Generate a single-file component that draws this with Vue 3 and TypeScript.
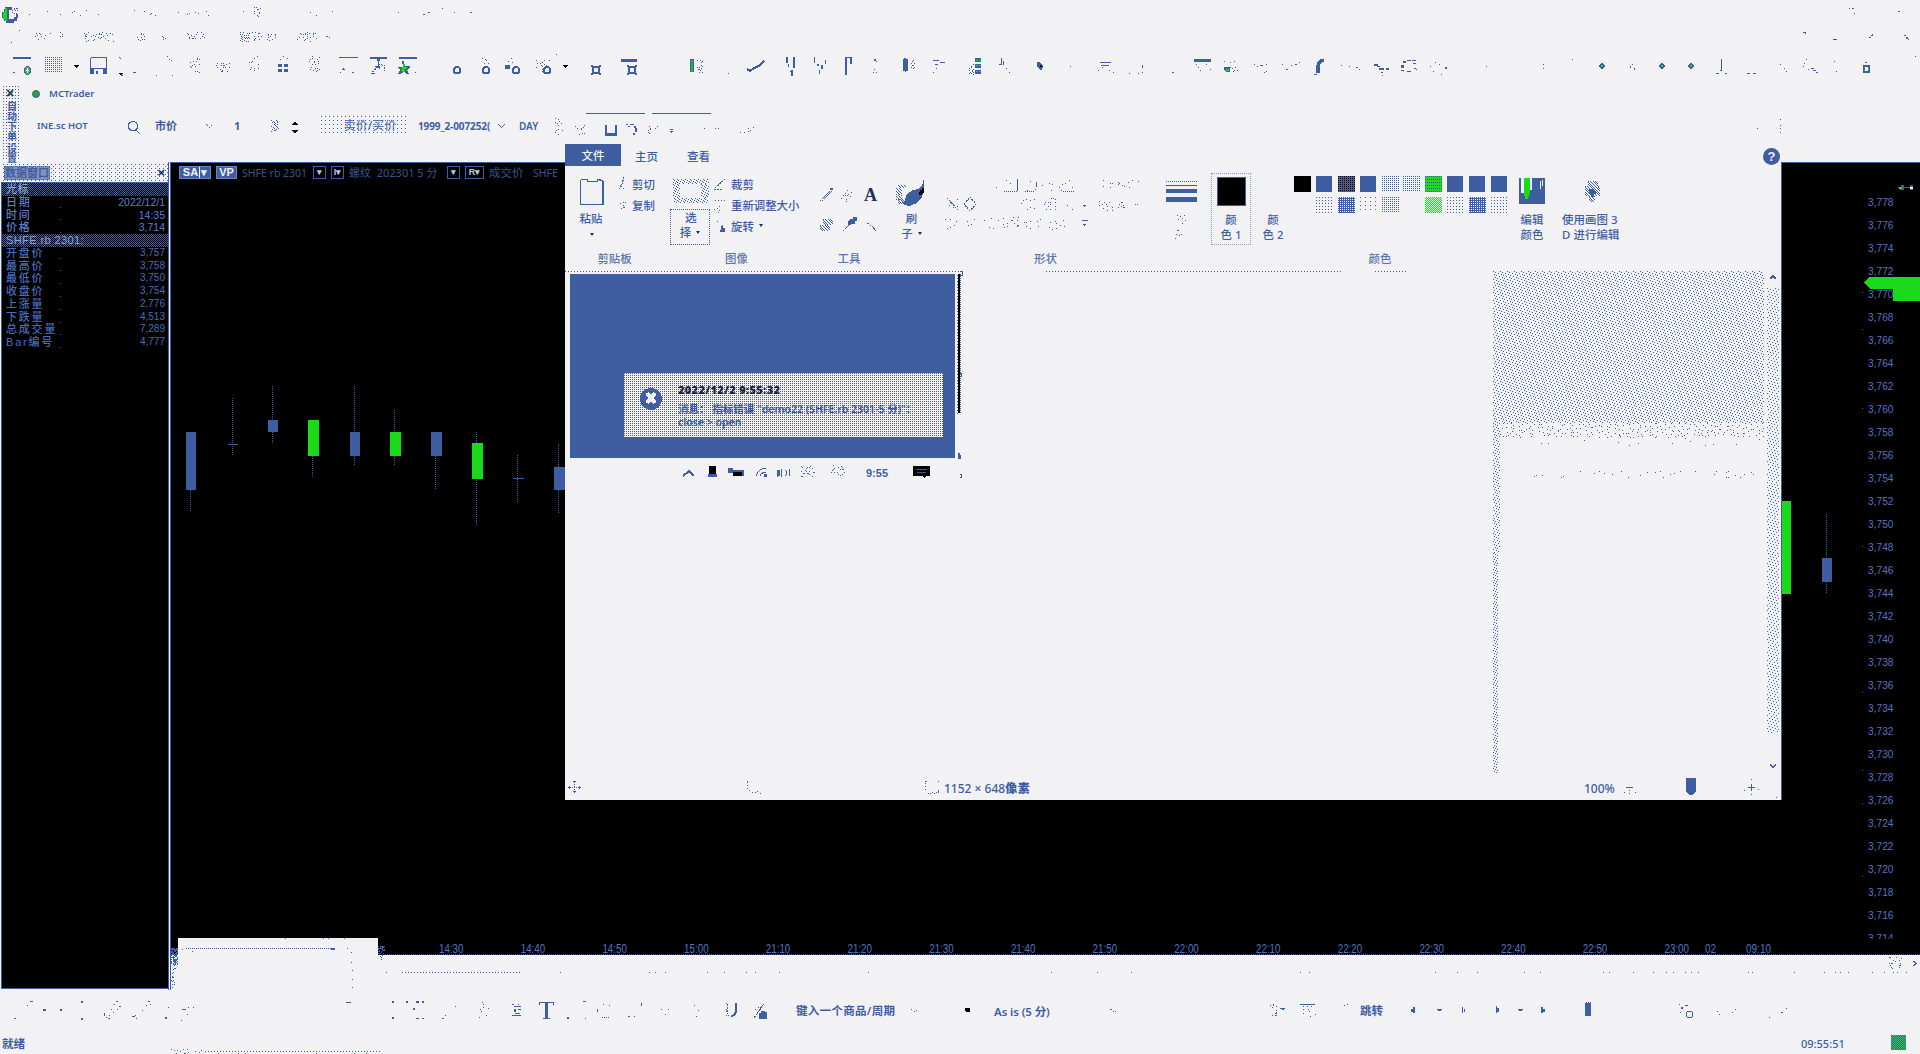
<script setup lang="ts">
/** Builds a path of small rectangles from "x,y[,w[,h]]" entries. */
function dots(list: string): string {
  return list
    .trim()
    .split(/\s+/)
    .map((item) => {
      const [x, y, w = 1, h = 1] = item.split(',').map(Number)
      return `M${x} ${y}h${w}v${h}h${-w}z`
    })
    .join('')
}

/** Scatters single pixels over a box, one for each step x step cell. */
function grain(x: number, y: number, w: number, h: number, step: number, fill = 1): string {
  let seed = Math.round(x * 31 + y * 17 + w * 7 + h) + 11
  const next = () => {
    seed = (seed * 1103515245 + 12345) % 2147483648
    return seed / 2147483648
  }
  let path = ''
  for (let cy = 0; cy < h; cy += step) {
    for (let cx = 0; cx < w; cx += step) {
      const dx = Math.floor(next() * step)
      const dy = Math.floor(next() * step)
      if (next() <= fill && cx + dx < w && cy + dy < h) path += `M${x + cx + dx} ${y + cy + dy}h1v1h-1z`
    }
  }
  return path
}

/** Evenly spread pixels: one every `period` px per row, each row shifted by the golden ratio. */
function weave(x: number, y: number, w: number, h: number, period: number): string {
  let path = ''
  for (let r = 0; r < h; r++) {
    for (let c = (r * 0.382 * period) % period; c < w; c += period) path += `M${x + Math.floor(c)} ${y + r}h1v1h-1z`
  }
  return path
}

const titleMarks = dots(
  '29,14 47,11 60,14 72,12 74,11 80,15 86,10 98,14 134,10 144,11 150,14 151,13 155,15 178,12 187,14 189,13 195,12 198,13 206,11 208,15 243,11 310,12 316,15 332,11 398,12 423,14,2 428,12,2 442,8 454,12 470,12,2 1849,8 1852,8,2 1854,13 1898,11,2',
) + grain(254, 7, 7, 10, 2, 0.5)

const menuMarks =
  dots('19,30 11,42 1803,32,3 1805,33 1833,39,4 1869,37,2 1871,35,2 1872,34 1904,35,2 1906,37,2,2 1908,39') +
  grain(34, 33, 18, 7, 2, 0.35) + grain(60, 32, 3, 7, 2, 0.5) + grain(84, 32, 30, 10, 2, 0.42) +
  grain(137, 32, 9, 9, 2, 0.5) + grain(162, 33, 4, 7, 2, 0.4) + grain(185, 32, 20, 9, 2, 0.4) +
  grain(240, 32, 10, 10, 2, 0.9) + grain(251, 32, 11, 9, 2, 0.4) + grain(267, 33, 11, 8, 2, 0.5) +
  grain(297, 32, 20, 10, 2, 0.4) + grain(325, 36, 7, 2, 2, 0.8)

const toolbarMarks = dots(
  `13,57,18,2 13,72,2 119,57 120,58 121,75,2 133,72,3 156,75 172,75 167,56 169,59 171,60
   278,64,4,3 284,64,4,3 278,69,4,3 284,69,4,3 280,59 283,56 287,58
   339,57,19,1 343,68,1 342,69,3,1 340,72 352,72,2 370,57,17,2 377,59,3,2 378,61,1,6 376,66,4,2 374,69,2 372,71,2 371,73,4 382,65 384,67
   399,57,18,2 415,72
   621,59,16,3 556,54 486,60 484,63 488,63 505,65,5,4 508,61 512,62 511,58
   728,73 786,57,2,6 793,57,2,11 788,64,1,3 791,70,2,6 790,71
   814,57,1,6 817,64,2,2 821,65,2,4 825,60,1,4 819,70,1,4
   845,57,7,1 845,58,2,17 850,58,2,6 874,59,2,2 876,61 874,69 876,72 873,72
   933,60,6 935,64,3 940,62,5 936,68 933,72 1001,58,1,7 999,64,2 1003,61,1,4 1006,68 1009,72
   1070,66 1100,62,11,1 1101,65,8,1 1102,67 1098,70 1109,70 1113,72 1129,73 1138,73 1142,65,1,3 1142,72 1172,72,2
   1194,59,17,3 1196,64 1198,67 1200,70 1206,64 1210,69 1224,61 1230,62 1234,61 1254,64 1257,66 1260,65,3 1266,64 1266,71 1264,72
   1282,64 1286,69,2 1291,65 1295,64,2 1299,62 1314,74,3 1341,65 1349,66 1356,67,2 1359,69
   1374,64,4,2 1379,68,5,2 1386,68,3,2 1381,72,2 1382,75 1377,66,3,1
   1401,65,3,3 1403,61,3,2 1407,60,4 1412,60,4 1413,63,3 1401,70,3 1407,71,4 1414,68,2 1416,69
   1430,66 1435,62 1439,64 1445,67,2,2 1433,71 1441,74 1486,66 1543,64 1543,68 1572,59
   1721,59,1,12 1716,73,3,1 1725,73,2,1 1720,70 1747,73,3 1753,73,3 1780,64 1784,68 1786,71 1804,63 1806,59 1803,66 1808,69 1811,68,3,1 1813,70,3,1 1816,72,2 1834,61 1836,71 1863,65,7,8 1865,62,2 1915,56`,
)
const toolbarGrain =
  grain(190, 57, 10, 16, 2, 0.35) + grain(216, 63, 14, 9, 2, 0.55) + grain(249, 56, 10, 16, 2, 0.35) +
  grain(309, 56, 11, 17, 2, 0.4) + grain(697, 60, 6, 13, 2, 0.55) + grain(911, 60, 4, 9, 2, 0.8) +
  grain(969, 63, 5, 12, 2, 0.7) + grain(1222, 67, 18, 5, 2, 0.4) + grain(1629, 63, 6, 7, 2, 0.55) +
  grain(536, 60, 14, 13, 2, 0.35) + grain(375, 63, 10, 9, 2, 0.4) + grain(482, 58, 6, 6, 3, 0.5)
const rings = [457, 486, 516, 547]
const gears = [596, 632]
const greenStops = [1602, 1662, 1691]

const cursorRows = [['日期', '2022/12/1'], ['时间', '14:35'], ['价格', '3,714']]
const barRows = [
  ['开盘价', '3,757'], ['最高价', '3,758'], ['最低价', '3,750'], ['收盘价', '3,754'],
  ['上涨量', '2,776'], ['下跌量', '4,513'], ['总成交量', '7,289'], ['Bar编号', '4,777'],
]

interface Candle { x: number; w: number; top: number; bottom: number; high: number; low: number; up?: boolean }
const candles: Candle[] = [
  { x: 186, w: 10, top: 432, bottom: 490, high: 432, low: 512 },
  { x: 228, w: 10, top: 444, bottom: 445, high: 398, low: 455 },
  { x: 268, w: 10, top: 420, bottom: 432, high: 386, low: 444 },
  { x: 308, w: 11, top: 420, bottom: 456, high: 420, low: 477, up: true },
  { x: 350, w: 10, top: 432, bottom: 456, high: 386, low: 466 },
  { x: 390, w: 11, top: 432, bottom: 456, high: 410, low: 466, up: true },
  { x: 431, w: 11, top: 432, bottom: 456, high: 432, low: 490 },
  { x: 472, w: 11, top: 443, bottom: 479, high: 432, low: 525, up: true },
  { x: 513, w: 11, top: 478, bottom: 479, high: 455, low: 502 },
  { x: 554, w: 11, top: 467, bottom: 490, high: 444, low: 513 },
  { x: 1781, w: 10, top: 501, bottom: 594, high: 501, low: 594, up: true },
  { x: 1822, w: 10, top: 558, bottom: 582, high: 514, low: 593 },
]
const prices = Array.from({ length: 33 }, (_, i) => ({ label: `3,${778 - i * 2}`, y: 206.3 + i * 22.99 }))
const times = ['14:30', '14:40', '14:50', '15:00', '21:10', '21:20', '21:30', '21:40', '21:50', '22:00', '22:10', '22:20', '22:30', '22:40', '22:50', '23:00']
  .map((label, i) => ({ label, x: 439 + i * 81.7, w: 24.5 }))
  .concat([{ label: '02', x: 1705, w: 11 }, { label: '09:10', x: 1746, w: 25 }])

const chartGrain = grain(171, 948, 7, 7, 1, 0.75) + grain(378, 946, 7, 9, 1, 0.6)
const underGrain =
  grain(171, 955, 7, 10, 1, 0.5) + grain(171, 957, 5, 32, 2, 0.6) + grain(378, 955, 7, 7, 2, 0.5) +
  grain(1888, 957, 14, 14, 2, 0.4) + grain(530, 972, 1050, 1, 8, 1) + grain(1597, 972, 320, 1, 4, 1) +
  dots('351,962 352,970 352,979 352,987 386,972 1913,961,2 1914,962,2 1915,963,2 1914,964,2 1913,965,2')

const drawMarks = dots(
  `30,1001,3 27,1005 14,1018,2 43,1009,3,2 60,1009,2,2 81,1001,2,2 81,1018,2,2 165,1017,2,2 168,1007 182,1009,4 188,1007 193,1007 187,1014 181,1020
   116,1001,2 114,1004 119,1006,2 117,1009 113,1012 109,1015 104,1013,1,3 106,1017 108,1018,2 111,1009 148,1001,2 146,1005 150,1004 142,1010 135,1015 132,1016,3 136,1018
   346,1002,5 392,1001,2,2 406,1001,2,2 416,1001,3,2 422,1001,2,2 413,1008,2,2 392,1017,2,2 416,1018,3 422,1018,2 442,1018,2 445,1015 455,1006
   512,1004,2 518,1004 514,1006,7 514,1009,2,3 518,1009,3 515,1013,5 512,1015,9
   539,1002,15,1 539,1003,1,2 553,1003,1,2 545,1003,3,15 543,1018,7
   567,1017,2,2 583,1001,3 585,1018 597,1009,1,3 603,1004 609,1005 602,1017 604,1017 606,1017 608,1017 628,1016,2 634,1016
   641,1003,1,3 661,1009 668,1009 665,1014 694,1005 698,1010 696,1016`,
)
const drawGrain = grain(478, 1001, 12, 18, 5, 1) + grain(725, 1003, 2, 13, 2, 0.7) + grain(754, 1007, 8, 10, 2, 0.5)
const rightMarks = dots(
  `1280,1008,5 1282,1009,2 1300,1004,15,1 1303,1006 1307,1006 1311,1006 1303,1009 1308,1009 1303,1013 1309,1011 1315,1014 1310,1016 1344,1005 1347,1004
   1411,1009,4,3 1413,1007,2,6 1437,1009,5,1 1438,1010,3 1462,1007,1,6 1464,1009,1,3 1496,1006,1,7 1497,1008,2,4 1518,1009,5,1 1519,1010,3 1541,1007,2,6 1543,1009,2,3
   1585,1003,6,13 1586,1002 1588,1002 1590,1002 1679,1004 1681,1007,2,2 1685,1005,3 1680,1012 1717,1011 1719,1014 1732,1012 1735,1009 1769,1017 1781,1012,2 1786,1008`,
)

const qatMarks = dots(
  `605,125,2,11 615,125,2,11 607,133,8,3 670,129,3,1 670,131,3,1 671,132,1,1
   626,124,2 628,126,2 630,124,4,1 634,126,2,2 635,128,2,4 633,133,2,2 704,128`,
) + grain(575, 125, 10, 10, 2, 0.45) + grain(648, 125, 3, 9, 2, 0.7) + grain(652, 126, 6, 3, 2, 0.4) +
  grain(715, 126, 9, 7, 3, 0.7) + grain(740, 126, 17, 7, 3, 0.6)

const shapeGrain = grain(946, 198, 12, 13, 4, 0.7) + grain(990, 180, 30, 12, 5, 0.4) + grain(1025, 180, 48, 12, 4, 0.4) +
  grain(1020, 198, 15, 12, 4, 0.7) + grain(1043, 198, 14, 12, 3, 0.5) + grain(1065, 198, 8, 12, 4, 0.6) +
  grain(945, 218, 12, 12, 4, 0.6) + grain(965, 218, 12, 10, 4, 0.7) + grain(984, 218, 15, 12, 4, 0.6) +
  grain(1003, 217, 16, 13, 3, 0.6) + grain(1022, 218, 20, 11, 4, 0.6) + grain(1048, 218, 25, 12, 5, 0.5) +
  grain(1103, 180, 36, 8, 4, 0.6) + grain(1099, 200, 14, 12, 3, 0.5) + grain(1118, 202, 7, 6, 2, 0.6) + grain(1130, 204, 8, 2, 3, 0.6)
const shapeMarks = dots('1017,179,1,12 1036,182,1,5 1083,205,3,1 1084,206 1082,220,6,1 1083,224,3,1 1084,225')

const palette = [
  'ink', 'blue', 'deep', 'blue', 'mist', 'mist', 'green', 'blue', 'blue', 'blue',
  'none', 'sparse', 'mid', 'faint', 'mist', 'none', 'lime', 'sparse', 'mid', 'sparse',
]

const sheetGrain = weave(1493, 271, 271, 152, 7) + grain(1500, 423, 264, 15, 4, 0.95) + grain(1530, 438, 232, 8, 8, 0.5) +
  weave(1493, 423, 7, 130, 6.4) + weave(1493, 553, 5, 220, 5.3) + grain(1530, 471, 230, 7, 6, 0.6) + weave(1767, 288, 12, 445, 8.2)
const trayGrain = grain(800, 466, 15, 11, 2, 0.5) + grain(829, 465, 16, 11, 2, 0.45) + grain(950, 467, 5, 9, 4, 0.7)
</script>

<template>
  <div class="desk">
    <svg class="strip" width="1920" height="28" viewBox="0 0 1920 28">
      <path class="f-blue" d="M5 7h7v3h-3v9h4v4H6v-2H4v-3H2v-6h2v-3h1zM12 19h2v-2h2v-3h2v4h-1v3h-3v2h-2z" />
      <path class="f-green" d="M5 8h2v13H5v-2H3v-7h2z" />
      <path class="f-blue" :d="grain(11, 7, 7, 8, 2, 0.7)" />
      <path class="f-blue" :d="titleMarks" />
    </svg>
    <svg class="strip" width="1920" height="20" viewBox="0 28 1920 20"><path class="f-blue" :d="menuMarks" /></svg>
    <svg class="strip" width="1920" height="36" viewBox="0 48 1920 36">
      <path class="f-blue" :d="toolbarMarks" />
      <path class="f-blue" :d="toolbarGrain" />
      <path class="f-blue" d="M24 69l2-3h3l2 3v3l-2 3h-3l-2-3z" />
      <path class="f-green" d="M25 69h1v-2h3v2h1v3h-1v2h-3v-2h-1z" /><path class="f-page" d="M27 68h1v2h1v1h-1v2h-1v-2h-1v-1h1z" />
      <g class="grid-icon"><path v-for="n in 8" :key="n" :d="`M45 ${55.5 + n * 2}h18`" /></g>
      <path d="M73 65h6l-3 3zM118 73h5l-2 2zM562 65h6l-3 3z" />
      <path class="s-blue" d="M90.500 57.500h16v16M90.500 57.500v16M92 68.500h13" /><path class="f-blue" d="M90 68h4v6h-4zM103 68h4v6h-4zM96 71h2v3h-2z" />
      <path class="f-blue" d="M402 61h2v5h6v2l-3 2 2 4h-3l-2-2-4 2h-2l2-4-2-2v-1h5z" /><path class="f-green" d="M403 64h2v3h2v2h-2v3h-2l-2-1 1-2-2-1 3-1z" />
      <rect v-for="x in rings" :key="x" class="s-blue thick" :x="x - 3" y="67" width="6" height="6.500" rx="3" />
      <g v-for="x in gears" :key="x">
        <rect class="s-blue thick" :x="x - 3" y="67" width="6" height="6" rx="2" /><path class="f-blue" :d="`M${x - 5} 65h2v2h-2zM${x + 3} 65h2v2h-2zM${x - 5} 73h2v2h-2zM${x + 3} 73h2v2h-2z`" />
      </g>
      <path class="f-blue" d="M690 59h4v13h-4z" /><path class="s-green dash" d="M691.500 60v12M692.500 61v11" />
      <path class="s-blue thick" d="M747 69l3 2 4-3 3-1 3-2 4-4" />
      <path class="f-blue" d="M903 59h1v-1h2v1h2v12h-2v1h-1v-1h-2z" />
      <path class="f-blue" d="M975 58h6v4h-6zM975 64h6v4h-6zM975 70h6v4h-6z" /><path class="s-green dash" d="M976 60.500h5M976 65.500h5M976 71.500h5" />
      <path class="f-blue" d="M1037 62h2l4 4-1 4h-2l-3-4z" /><path d="M1040 65h1v1h1v1h-2z" />
      <path class="f-blue" d="M1223 69l3-2h4v5h-4z" /><path class="f-green" d="M1226 69h3v2h-3z" />
      <path class="f-blue" d="M1316 73v-7l2-5 2-2h4v3h-2l-2 3v8z" />
      <g v-for="x in greenStops" :key="x"><path class="f-blue" :d="`M${x - 3} 66l3-4 3 4-3 4z`" /><path class="f-green" :d="`M${x - 1} 65h2v2h-2z`" /></g>
      <path class="f-page" d="M1865 67h3v4h-3z" /><path class="f-green" d="M1864 67h1v1h-1zM1864 70h1v1h-1zM1868 68h1v2h-1z" />
    </svg>

    <section class="trader">
      <aside class="side-tab"><span class="side-x">×</span><span class="side-name">自动下单 设置</span></aside>
      <div class="trader-main">
        <div class="trader-head"><i class="lamp" />MCTrader</div>
        <div class="order-row">
          <span class="symbol">INE.sc HOT</span>
          <svg class="lens" width="13" height="14" viewBox="0 0 13 14"><path class="s-blue" d="M8 9l4 4M5 .5c6 0 6 9 0 9s-6-9 0-9z" /></svg>
          <b class="kind">市价</b>
          <svg class="chev c1" width="7" height="5" viewBox="0 0 7 5"><path class="s-blue dash" d="M.5.500l3 3 3-3" /></svg>
          <b class="lots">1</b>
          <svg class="lot-grid" width="9" height="12" viewBox="0 0 9 12"><path class="f-blue" :d="grain(0, 0, 9, 12, 2, 0.7)" /></svg>
          <svg class="spin" width="6" height="11" viewBox="0 0 6 11"><path d="M0 3h6L4 0H2zM0 8h6l-2 3H2z" /></svg>
          <span class="quote">卖价/买价</span>
          <b class="account">1999_2-007252(</b>
          <svg class="chev" width="7" height="5" viewBox="0 0 7 5"><path class="s-blue" d="M.5.500l3 3 3-3" /></svg>
          <b class="day">DAY</b>
          <svg class="lot-grid q2" width="8" height="19" viewBox="0 0 8 19"><path class="f-blue" :d="grain(0, 0, 8, 19, 3, 0.8)" /></svg>
        </div>
      </div>
    </section>

    <div class="work">
      <aside class="data">
        <header class="data-title"><b>数据窗口</b><span>×</span></header>
        <div class="data-body">
          <div class="data-group">光标</div>
          <div v-for="row in cursorRows" :key="row[0]" class="data-row bright"><span>{{ row[0] }}</span><i /><em>{{ row[1] }}</em></div>
          <div class="data-group">SHFE.rb 2301:</div>
          <div v-for="row in barRows" :key="row[0]" class="data-row"><span>{{ row[0] }}</span><i /><em>{{ row[1] }}</em></div>
        </div>
      </aside>

      <main class="chart">
        <header class="legend">
          <b class="chip">SA<i class="cut" />▾</b><b class="chip vp">VP</b>
          <span class="leg-a">SHFE rb 2301</span><b class="box">▾</b><b class="box">I▾</b>
          <span class="leg-b">螺纹&nbsp; 202301 5 分</span><b class="box">▾</b><b class="box r">R▾</b>
          <span class="leg-c">成交价</span><span>SHFE</span>
        </header>
        <svg class="plot" width="1749" height="772" viewBox="171 183 1749 772">
          <g v-for="c in candles" :key="c.x">
            <path class="wick" :d="`M${c.x + Math.floor(c.w / 2) - 0.5} ${c.high}V${c.low}`" />
            <rect :class="c.up ? 'f-green' : 'f-blue'" :x="c.x" :y="c.top" :width="c.w" :height="c.bottom - c.top" />
          </g>
          <g class="price">
            <text v-for="p in prices" :key="p.label" x="1868" :y="p.y" textLength="25.500" lengthAdjust="spacingAndGlyphs">{{ p.label }}</text>
          </g>
          <rect x="1860" y="939" width="60" height="6" />
          <path class="f-blue" :d="grain(1862, 200, 1, 738, 9)" />
          <path class="f-green" d="M1864 282.500l6-6h50v24h-27v-12h-23z" />
          <path class="f-blue" d="M1897 187h4v-2h3v2h6v-2h3v5h-3v-2h-6v2h-4z" /><path class="f-green" d="M1899 187h3v2h-3z" /><path class="f-page" d="M1910 187h3v2h-3z" />
          <g class="time">
            <text v-for="t in times" :key="t.label" :x="t.x" y="953" :textLength="t.w" lengthAdjust="spacingAndGlyphs">{{ t.label }}</text>
          </g>
          <path class="f-blue" :d="chartGrain" />
          <path class="rule" d="M385 954.500h1535" />
          <rect class="f-page" x="178" y="938" width="200" height="17" />
          <path class="rule" d="M186 948.500h148" /><path class="f-blue" d="M331 948h4v2h-4z" />
          <path class="f-blue" :d="grain(178, 938, 170, 1, 5, 0.6) + dots('182,949 192,951 347,948 351,952')" />
        </svg>
        <svg class="strip under" width="1749" height="35" viewBox="171 955 1749 35">
          <path class="f-blue" :d="underGrain" /><path class="rule wide" d="M402 972.500h118" />
        </svg>
      </main>
    </div>

    <footer class="bottom-bar">
      <svg width="790" height="44" viewBox="0 990 790 44">
        <path class="f-blue" :d="drawMarks" /><path class="f-blue" :d="drawGrain" />
        <path class="s-blue dash" d="M727 1003.500v10l2 2.500" /><path class="s-blue thick" d="M736 1003v9l-2 3-3 1.500" />
        <path class="f-blue" d="M759 1013h2v-2h4v1h2v7h-8z" />
        <path class="s-blue dash" d="M754 1018l8-12 3-3" />
      </svg>
      <b class="jump-in">键入一个商品/周期</b>
      <svg class="mini" width="80" height="20" viewBox="900 1000 80 20"><path class="f-blue" :d="dots('911,1009 914,1011 916,1010')" /><path d="M965 1008h5v3l-1 1h-2l-2-1z" /></svg>
      <b class="as-is">As is (5 分)</b>
      <svg class="gap" width="306" height="44" viewBox="1054 990 306 44"><path class="s-blue dash" d="M1110 1009l3 2h3" /><path class="f-blue" :d="grain(1270, 1003, 7, 13, 2, 0.5)" /><path class="f-blue" :d="rightMarks" /></svg>
      <b class="jump">跳转</b>
      <svg class="gap" width="430" height="44" viewBox="1383 990 430 44"><path class="f-blue" :d="rightMarks" /><rect class="s-blue" x="1686.500" y="1011.500" width="6" height="6" rx="2" /></svg>
    </footer>
    <footer class="status">
      <b>就绪</b>
      <svg class="status-mid" width="220" height="20" viewBox="168 1034 220 20"><path class="rule wide" d="M205 1051.500h175" /><path class="f-blue" :d="grain(170, 1049, 36, 5, 3, 0.7) + grain(205, 1053, 178, 1, 5)" /></svg>
      <time>09:55:51</time><i class="live" />
    </footer>

    <section class="paint">
      <svg class="strip" width="1216" height="32" viewBox="565 112 1216 32">
        <path class="f-blue" d="M586 113h59v1h-59zM652 113h59v1h-59z" /><path class="f-blue" :d="qatMarks" />
        <path class="f-blue" :d="dots('1757,128 1780,119 1780,125 1780,128 1780,132')" />
      </svg>
      <nav class="tabs">
        <b class="tab file">文件</b><b class="tab home">主页</b><b class="tab view">查看</b><b class="help">?</b>
      </nav>

      <div class="ribbon">
        <div class="group clip">
          <div class="group-body">
            <div class="big paste">
              <svg width="25" height="28" viewBox="579 178 25 28"><path class="s-blue" d="M580.500 180v24.500h22V180.500h-4M587 179.500h-6M587 179v2h10v-2h4" /><path class="f-blue" d="M602 181h2v24h-2zM581 204h22v1h-22z" /></svg>
              <span>粘贴</span><i class="tri" />
            </div>
            <div class="smalls">
              <div><svg width="13" height="15" viewBox="620 177 13 15"><path class="s-blue dash" d="M625 177l-2 7-3 5M622 186l3 3" /></svg>剪切</div>
              <div><svg width="13" height="15" viewBox="620 198 13 15"><path class="f-blue" :d="grain(621, 202, 6, 8, 2, 0.45)" /></svg>复制</div>
            </div>
          </div>
          <label>剪贴板</label>
        </div>

        <div class="group image">
          <div class="group-body">
            <div class="big select">
              <svg width="42" height="38" viewBox="668 172 42 38"><path class="f-blue" :d="weave(672, 179, 36, 5, 4.300) + weave(673, 198, 34, 5, 4.300) + weave(672, 184, 7, 14, 4.300) + weave(700, 184, 8, 14, 4.300) + grain(673, 174, 34, 1, 5)" /></svg>
              <span class="framed">选<br />择<i class="tri in" /></span>
            </div>
            <div class="smalls three">
              <div><svg width="17" height="14" viewBox="714 177 17 14"><path class="s-blue dash" d="M715 187l10-9M714 188.500h8" /></svg>裁剪</div>
              <div><svg width="17" height="14" viewBox="714 198 17 14"><path class="rule wide" d="M715 199.500h11" /><path class="f-blue" :d="grain(713, 203, 10, 9, 3, 0.6)" /></svg>重新调整大小</div>
              <div><svg width="17" height="14" viewBox="714 219 17 14"><path class="f-blue" d="M722 222v2h1v3h2v4h-5v-2h1z" /><path class="f-blue" :d="grain(714, 218, 4, 12, 3, 0.6)" /></svg>旋转<i class="tri in" /></div>
            </div>
          </div>
          <label>图像</label>
        </div>

        <div class="group tools">
          <div class="group-body">
            <svg width="75" height="82" viewBox="812 166 75 82">
              <path class="s-blue dash" d="M820 201l12-12M822 201l10-10" /><path class="f-blue" d="M830 188h3v2h-3z" />
              <path class="f-blue" :d="grain(841, 189, 12, 13, 3, 0.7) + weave(823, 219, 10, 6, 2.600) + weave(820, 225, 10, 6, 2.600)" />
              <path class="f-blue" d="M850 219h3v-2h4v4h-2v3h-4v1h-3v-3z" /><path class="s-blue dash" d="M843 231l6-6M867 223l5 3" /><path class="s-blue" d="M872 226l4 5" />
              <text class="letter" x="864" y="201">A</text>
            </svg>
          </div>
          <label>工具</label>
        </div>

        <div class="group brush">
          <div class="group-body">
            <div class="big">
              <svg width="34" height="32" viewBox="895 176 34 32"><path class="f-blue" d="M926 178v12l-2 7-5 6-7 3-6-1-2-2 3-3 2-6 6-4 5-1 4-3z" /><path class="f-blue" :d="weave(898, 188, 6, 12, 3) + weave(900, 185, 8, 3, 3) + weave(900, 199, 6, 5, 2.300)" /><path d="M922 190h2v-2h2v5h-2v2h-3z" /></svg>
              <span>刷<br />子<i class="tri in" /></span>
            </div>
          </div>
        </div>

        <div class="group shapes">
          <div class="group-body">
            <svg width="221" height="82" viewBox="935 166 221 82">
              <path class="f-blue" :d="shapeGrain" /><path class="f-blue" :d="shapeMarks" />
              <path class="s-blue dash" d="M964 204l6-7 6 7-6 7zM947 198l11 12" />
              <path class="rule" d="M1004 191.500h14M1025 191.500h10M1063 191.500h11" />
            </svg>
          </div>
          <label>形状</label>
        </div>

        <div class="group size">
          <div class="group-body">
            <svg width="51" height="82" viewBox="1156 166 51 82">
              <path class="rule" d="M1166 181.500h31" /><path class="f-blue" d="M1166 185h31v1h-31zM1166 189h31v4h-31zM1166 197h31v5h-31z" />
              <path class="f-blue" :d="grain(1177, 215, 9, 9, 3, 0.7) + grain(1175, 230, 8, 9, 3, 0.8)" />
            </svg>
          </div>
        </div>

        <div class="group colors">
          <div class="group-body">
            <div class="swatch one"><i />颜<br />色 1</div>
            <div class="swatch two"><i />颜<br />色 2</div>
            <div class="palette"><i v-for="(tone, i) in palette" :key="i" :class="tone" /></div>
            <div class="swatch edit">
              <svg width="26" height="26" viewBox="0 0 26 26"><path class="f-blue" d="M0 0h2v15h4V0h20v26H0z" /><path class="f-green" d="M5 0h6v14l-2 7H6l-1-6z" /><path class="f-page" d="M2 0h3v12H2zM11 0h2v12h-2zM21 3h1v8h-1zM23 2h1v6h-1z" /></svg>
              编辑<br />颜色
            </div>
          </div>
          <label>颜色</label>
        </div>

        <div class="group p3d">
          <div class="group-body">
            <div class="swatch three-d">
              <svg width="16" height="23" viewBox="0 0 16 23"><path class="f-blue" :d="weave(3, 0, 10, 5, 2.600) + weave(0, 5, 15, 10, 2.600) + weave(4, 15, 6, 6, 2.600)" /><path class="f-blue" d="M4 8h5v2h2v3H9v3H6v-3H4z" /></svg>
              <span>使用画图 3<br />D 进行编辑</span>
            </div>
          </div>
        </div>
      </div>

      <div class="sheet">
        <div class="picture">
          <div class="shot">
            <div class="toast">
              <svg width="24" height="24" viewBox="0 0 24 24"><circle class="f-blue" cx="12" cy="12" r="11" /><path class="cross" d="M8 6l8 10M16 6L8 16" /></svg>
              <div class="toast-text">
                <b>2022/12/2 9:55:32</b>
                <span>消息： 指标错误 "demo22 (SHFE.rb 2301-5 分)"：</span>
                <span class="last">close &gt; open</span>
              </div>
            </div>
          </div>
          <div class="tray">
            <svg width="296" height="14" viewBox="570 465 296 14">
              <path class="s-blue thick" d="M683 476l6-5 5 5" /><path d="M709 466h7v10h-7z" /><path class="f-blue" d="M708 474h9v3h-9zM728 468h5v2h11v6h-11v-3h-5z" /><path d="M733 472h9v4h-9z" />
              <path class="s-blue" d="M756 476c2-5 5-8 10-8M760 476c1-3 3-4 6-4M777.500 470v7M781 468.500v8M785 470c2 2 2 4 0 6M789.500 469v7" /><path class="f-blue" d="M764 474h3v3h-3zM778 470h2v6h-2z" />
              <path class="f-blue" :d="trayGrain" />
            </svg>
            <b>9:55</b>
            <svg class="note" width="17" height="12" viewBox="0 0 17 12"><path d="M0 0h17v10h-4l-2 2-2-2H0z" /><path class="s-blue" d="M3 3.500h11M4 6.500h9" /></svg>
          </div>
        </div>
        <svg class="edge" width="12" height="505" viewBox="955 271 12 505">
          <path class="rule wide" d="M957 274.500v140" /><path d="M958 274h2v139h-2z" /><path class="rule" d="M960.500 274v139" />
          <g class="s-blue"><path d="M960 271.500h2v4h-2M960 373.500h1.500v3H960M960 474.500h1.500v3H960" /></g><path class="f-blue" d="M958 453h2v2h1v4h-3z" />
        </svg>
        <svg class="far" width="288" height="505" viewBox="1493 271 288 505">
          <path class="f-blue" :d="sheetGrain" />
          <path class="s-blue thick" d="M1770 279l3-3 3 3M1770 764.500l3 3 3-3" />
        </svg>
      </div>

      <div class="paint-status">
        <svg width="376" height="24" viewBox="565 776 376 24">
          <path class="f-blue" :d="dots('573,781,3 574,782 574,784 574,786 568,787,3 569,786 569,788 572,787 574,787 576,787 578,787,3 579,786 579,788 574,789 573,791,3 574,792 747,781,1,2 747,785 747,788 749,790 752,792 755,792 757,791 760,793')" />
          <path class="f-blue" :d="dots('925,781,2 925,783 925,786 925,789 938,781 938,790,1,3 928,793 930,793 932,792 934,793 936,792')" />
        </svg>
        <span class="dims">1152 × 648<b>像素</b></span>
        <span class="zoom">100%</span>
        <svg class="slide" width="160" height="24" viewBox="1617 776 160 24">
          <path class="f-blue" d="M1626 787h7v1h-7zM1686 778h10v13l-3 4h-4l-3-4z" /><path class="s-blue" d="M1751.500 784v7M1748 787.500h7" />
          <path class="f-blue" :d="dots('1624,792 1629,793 1635,792 1629,790 1744,790 1751,779 1758,789 1751,794 1776,797')" />
        </svg>
      </div>
    </section>
  </div>
</template>

<style>
body { background: #f2f2f4; overflow: hidden; }
</style>

<style scoped>
.desk {
  --blue: #3f5ea2; --page: #f2f2f4; --green: #1bda1b;
  position: relative; display: flex; flex-direction: column; width: 1920px; height: 1054px; overflow: hidden;
  background: var(--page); color: var(--blue); font: 12px/14px "Noto Sans", "Noto Sans CJK SC", sans-serif;
}
svg { display: block; flex: none; shape-rendering: crispEdges; }
.f-blue { fill: #3f5ea2; } .f-green { fill: #1bda1b; } .f-page { fill: #f2f2f4; }
.s-blue { fill: none; stroke: #3f5ea2; } .s-green { fill: none; stroke: #1bda1b; }
.thick { stroke-width: 2; } .dash { stroke-dasharray: 2 1; }
.rule { fill: none; stroke: #3f5ea2; stroke-dasharray: 1 1; } .rule.wide { stroke-dasharray: 1 2; }
.grid-icon path { stroke: #3f5ea2; stroke-dasharray: 1 1; }

.trader { display: flex; height: 78px; flex: none; }
.side-tab {
  width: 17px; height: 75px; margin: 2px 0 0 3px; display: flex; flex-direction: column; align-items: center;
  background: conic-gradient(from 270deg at 1px 1px, var(--blue) 90deg, transparent 0) 0 0 / 3px 3px;
}
.side-x { font: bold 14px/15px "Liberation Sans", sans-serif; color: #20305a; margin-left: -3px; }
.side-name { writing-mode: vertical-rl; font-size: 10px; line-height: 12px; font-weight: bold; height: 60px; white-space: nowrap; }
.trader-main { flex: 1; }
.trader-head { display: flex; align-items: center; height: 20px; padding-left: 12px; font-size: 9.600px; font-weight: 600; }
.lamp { width: 6px; height: 6px; border: 1px solid var(--blue); border-radius: 4px; background: #24a03c; margin-right: 9px; }
.order-row { display: flex; align-items: center; height: 44px; padding-left: 18px; font-size: 11px; white-space: nowrap; }
.symbol { width: 91px; margin-left: -1px; font: 600 9.500px/14px "Noto Sans"; }
.lens { width: 13px; margin-top: 4px; }
.kind { width: 51px; margin-left: 14px; }
.chev.c1 { margin-right: 21px; }
.lots { width: 37px; }
.spin { margin: 2px 23px 0 12px; }
.quote {
  width: 88px; height: 20px; line-height: 20px; text-align: center; margin-right: 9px; font-size: 12px; text-indent: 10px;
  background: conic-gradient(from 270deg at 1px 1px, var(--blue) 90deg, transparent 0) 0 0 / 4px 4px;
}
.account { width: 76px; margin-right: 4px; font-size: 10px; letter-spacing: -.1px; }
.day { margin-left: 14px; width: 36px; font-size: 10px; font-weight: 600; }

.work { display: flex; height: 828px; flex: none; }
.data { width: 168px; flex: none; margin-right: 1px; border-right: 1px solid var(--blue); }
.data-title {
  display: flex; justify-content: space-between; align-items: center; height: 18px; margin: 2px 0 0 3px; padding-right: 3px;
  background: conic-gradient(from 270deg at 1px 1px, var(--blue) 90deg, transparent 0) 0 0 / 4px 4px,
    conic-gradient(from 270deg at 1px 1px, var(--blue) 90deg, transparent 0) 2px 2px / 8px 4px;
}
.data-title b { font-size: 11px; line-height: 12px; background: #8193be; border: 1px dotted var(--blue); margin-left: 1px; }
.data-title span { font: bold 13px/14px "Liberation Sans"; color: #20305a; }
.data-body { height: 807px; margin-left: 1px; background: #000; border: solid var(--blue); border-width: 1px 0 1px 1px; box-sizing: border-box; font: 11px/12.780px "Liberation Sans", "Noto Sans CJK SC", sans-serif; }
.data-group {
  height: 12.780px; padding-left: 4px; color: #8fa6da; letter-spacing: .4px; font-weight: 500;
  background: repeating-conic-gradient(var(--blue) 0 25%, #000 0 50%) 0 0 / 2px 2px;
}
.data-row { display: flex; align-items: center; height: 12.780px; padding: 0 3px 0 4px; color: #4a6dbb; white-space: nowrap; }
.data-row span { letter-spacing: 1.800px; width: 54px; font-weight: 500; }
.data-row i { width: 1px; height: 1px; background: var(--blue); margin-top: 10px; }
.data-row em { flex: 1; text-align: right; font-style: normal; font-size: 10px; }
.bright { color: #5b7fce; }
.bright em { font-size: 10.500px; }

.chart { width: 1750px; flex: none; border-left: 1px solid var(--blue); box-sizing: border-box; height: 828px; }
.legend { display: flex; align-items: center; height: 21px; padding: 1px 0 2px 8px; box-sizing: border-box; background: #000; border-top: 1px solid var(--blue); color: #36558f; font-size: 10.500px; white-space: nowrap; }
.chip { display: flex; align-items: center; justify-content: center; width: 32px; height: 13px; margin-right: 5px; background: var(--blue); color: var(--page); font: bold 11px/13px "Liberation Sans"; outline: 1px solid #6c86bd; outline-offset: -1px; }
.cut { width: 1px; height: 11px; background: var(--page); margin: 0 1px; }
.vp { width: 21px; }
.leg-a { width: 71px; } .leg-b { width: 98px; font-size: 11px; } .leg-c { width: 44px; font-size: 11.500px; }
.box { width: 11px; height: 11px; margin-right: 5px; border: 1px solid var(--blue); color: #b9c5e0; font: bold 9px/11px "Liberation Sans"; text-align: center; }
.box.r { width: 17px; }
.plot { background: #000; }
.wick { stroke: #3f5ea2; stroke-dasharray: 1 1; }
.price text, .time text { fill: #5175c6; font: 11px "Liberation Sans", sans-serif; }
.time text { font-size: 12px; }

.bottom-bar { display: flex; align-items: center; height: 44px; flex: none; font-size: 11.500px; white-space: nowrap; }
.jump-in { width: 104px; margin-left: 6px; margin-top: -3px; letter-spacing: .3px; font-weight: 600; }
.mini { margin-top: -4px; }
.as-is { width: 60px; margin: -1px 0 0 14px; font-size: 11.500px; font-weight: 600; letter-spacing: -.1px; }
.jump { width: 23px; margin-top: -3px; }
.status { display: flex; align-items: center; height: 20px; flex: none; font-size: 11.500px; }
.status b { width: 166px; padding-left: 2px; }
.status time { margin-left: 1413px; width: 90px; font-size: 11px; font-weight: 500; }
.live { width: 15px; height: 15px; margin-top: -3px; background: repeating-conic-gradient(var(--blue) 0 25%, var(--green) 0 50%) 0 0 / 2px 2px; }

.paint { position: absolute; left: 565px; top: 112px; width: 1217px; height: 688px; background: var(--page); display: flex; flex-direction: column; background-image: linear-gradient(var(--blue), var(--blue)); background-size: 1px 638px; background-repeat: no-repeat; background-position: 1216px 50px; }
.tabs { display: flex; height: 22px; flex: none; align-items: center; font-size: 11.500px; }
.tab { font-weight: 500; }
.file { width: 56px; height: 22px; line-height: 23px; text-align: center; background: var(--blue); color: var(--page); }
.home { margin: 3px 0 0 14px; width: 52px; } .view { margin-top: 3px; width: 1076px; }
.help { width: 17px; height: 17px; margin-top: 2px; border-radius: 9px; background: var(--blue); color: var(--page); font: bold 13px/17px "Liberation Sans"; text-align: center; }

.ribbon { display: flex; height: 105px; flex: none; font-size: 11.400px; line-height: 15px; font-weight: 500; }
.group { display: flex; flex-direction: column; flex: none; }
.group-body { display: flex; height: 84px; flex: none; }
.group label { text-align: center; line-height: 17px; opacity: .85; }
.clip { width: 102px; } .clip label { padding: 0 3px 0 0; width: 99px; }
.big { display: flex; flex-direction: column; align-items: center; text-align: center; }
.paste { width: 52px; padding-top: 12px; box-sizing: border-box; }
.paste svg { margin-bottom: 5px; }
.tri { display: block; border: solid transparent; border-width: 3px 2.500px 0; border-top-color: #20305a; margin-top: 7px; margin-left: 2px; }
.tri.in { display: inline-block; margin: 0 0 3px 5px; }
.smalls { display: flex; flex-direction: column; gap: 6px; padding-top: 11px; padding-left: 2px; white-space: nowrap; }
.smalls div { display: flex; align-items: center; height: 15px; }
.smalls.three { padding-left: 3px; }
.image { width: 145px; } .image label { padding-right: 6px; }
.select { width: 42px; padding: 6px 0 0 2px; }
.framed { width: 38px; height: 34px; border: 1px dotted var(--blue); text-indent: 2px; margin-top: -1px; }
.tools { width: 75px; } .tools label { width: 74px; }
.letter { font: bold 18px "Liberation Serif"; fill: #20305a; }
.brush { width: 48px; } .brush .big { width: 46px; padding-top: 10px; box-sizing: border-box; }
.brush span { margin-top: 3px; padding-left: 3px; }
.shapes { width: 221px; } .size { width: 51px; }
.colors { width: 346px; }
.swatch { display: block; text-align: center; }
.one { width: 38px; margin: 8px 3px 0 5px; height: 70px; outline: 1px dotted #8b9cc6; }
.one i, .two i { display: block; width: 27px; height: 27px; margin: 4px auto 7px; }
.one i { background: #000; outline: 1px solid var(--blue); }
.two { width: 40px; padding-top: 8px; }
.palette { display: grid; grid-template-columns: repeat(10, 17px); grid-template-rows: 16px 16px; gap: 5px 4.900px; padding: 10px 0 0 1px; width: 214px; height: 37px; }
.palette .ink { background: #000; } .palette .blue { background: var(--blue); margin: 0 1px 0 0; }
.palette .deep { background: conic-gradient(from 270deg at 1px 1px, #000 90deg, transparent 0) 0 0 / 2px 2px, var(--blue); }
.palette .green { background: conic-gradient(from 270deg at 1px 1px, var(--blue) 90deg, transparent 0) 0 0 / 2px 3px, var(--green); }
.palette .mist { background: conic-gradient(from 270deg at 1px 1px, var(--blue) 90deg, transparent 0) 0 0 / 2px 2px; }
.palette .mid { background: conic-gradient(from 270deg at 1px 1px, var(--page) 90deg, transparent 0) 0 0 / 2px 2px, var(--blue); }
.palette .sparse { background: conic-gradient(from 270deg at 1px 1px, var(--blue) 90deg, transparent 0) 0 0 / 3px 3px; }
.palette .faint { background: conic-gradient(from 270deg at 1px 1px, var(--blue) 90deg, transparent 0) 0 0 / 5px 4px; }
.palette .lime { background: repeating-conic-gradient(var(--green) 0 25%, var(--page) 0 50%) 0 0 / 2px 2px; }
.edit { width: 40px; margin-left: 4px; padding-top: 12px; line-height: 15px; } .edit svg { margin: 0 auto 8px; }
.p3d .swatch { width: 70px; margin-left: 7px; padding-top: 15px; text-align: left; white-space: nowrap; }
.p3d svg { margin: 0 0 8px 25px; }
.three-d span { display: block; padding-left: 2px; letter-spacing: .1px; }

.sheet {
  display: flex; height: 505px; flex: none; padding-left: 5px;
  background:
    repeating-linear-gradient(90deg, var(--blue) 0 1px, transparent 1px 3px) 0 0 / 395px 1px no-repeat,
    repeating-linear-gradient(90deg, var(--blue) 0 1px, transparent 1px 3px) 481px 0 / 297px 1px no-repeat,
    repeating-linear-gradient(90deg, var(--blue) 0 1px, transparent 1px 3px) 810px 0 / 33px 1px no-repeat;
}
.picture { width: 385px; padding-top: 3px; }
.shot { height: 184px; padding: 99px 0 0 54px; box-sizing: border-box; background: var(--blue); }
.toast { display: flex; width: 319px; height: 64px; padding: 14px 0 0 15px; box-sizing: border-box; background: conic-gradient(from 270deg at 1px 1px, var(--blue) 90deg, transparent 0) 0 0 / 2px 2px, var(--page); }
.cross { stroke: #f2f2f4; stroke-width: 4; }
.toast-text { margin: -4px 0 0 15px; display: flex; flex-direction: column; font-size: 10.500px; line-height: 13px; white-space: nowrap; color: #3657a0; font-weight: 600; }
.toast-text b { color: #14203f; line-height: 14px; font-size: 11px; letter-spacing: .15px; transform-origin: left; }
.toast-text b { letter-spacing: .35px; }
.toast-text span { margin-top: 6px; }
.toast-text .last { margin-top: 0; }
.tray { display: flex; align-items: center; padding-top: 7px; height: 14px; width: 395px; }
.tray b { width: 25px; font: bold 11px/12px "Liberation Sans"; height: 11px; overflow: hidden; }
.note { margin-left: 22px; margin-top: -1px; }
.far { margin-left: 526px; }
.paint-status { display: flex; align-items: center; height: 24px; flex: none; }
.dims { width: 100px; margin: 2px 0 0 3px; font-size: 12px; white-space: nowrap; font-weight: 500; }
.dims b { font-weight: 900; letter-spacing: .5px; }
.zoom { width: 33px; margin: 1px 0 0 540px; font-size: 12px; font-weight: 500; }
</style>
